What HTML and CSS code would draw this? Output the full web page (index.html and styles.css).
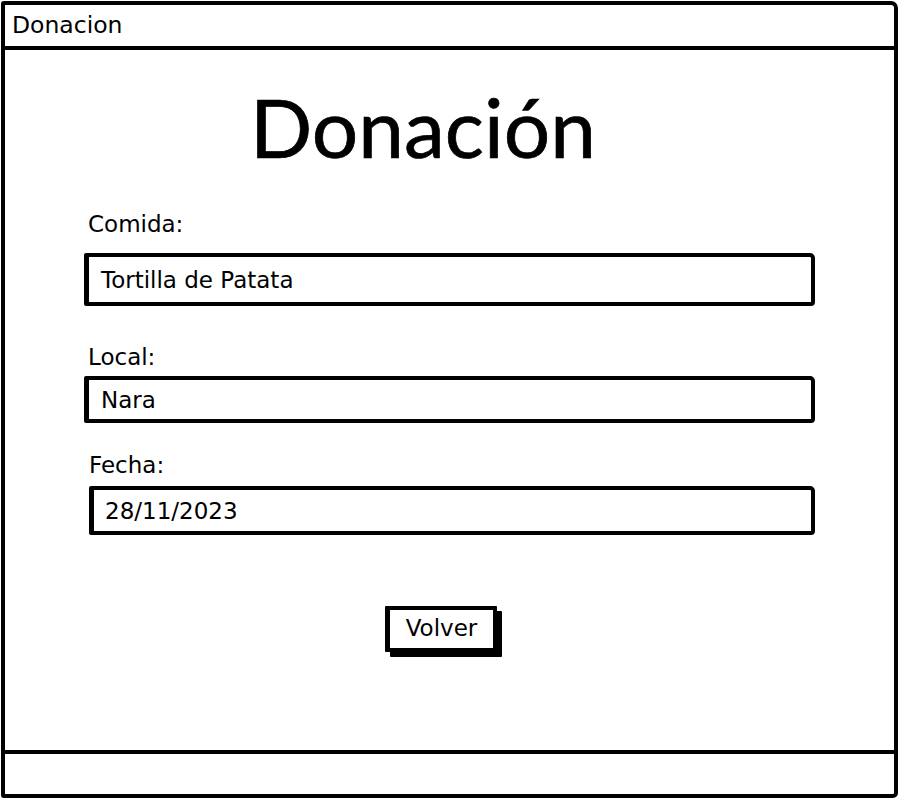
FILE: index.html
```html
<!DOCTYPE html>
<html lang="es">
<head>
<meta charset="utf-8">
<title>Donacion</title>
<link rel="stylesheet" href="styles.css">
</head>
<body>
<div class="window">
  <div class="titlebar">Donacion</div>
  <main class="content">
    <h1 class="heading">Donación</h1>
    <div class="form">
      <label class="label label-comida">Comida:</label>
      <div class="field field-comida">Tortilla de Patata</div>
      <label class="label label-local">Local:</label>
      <div class="field field-local">Nara</div>
      <label class="label label-fecha">Fecha:</label>
      <div class="field field-fecha">28/11/2023</div>
    </div>
    <div class="actions">
      <button class="btn" type="button">Volver</button>
    </div>
  </main>
  <div class="footer"></div>
</div>
</body>
</html>
```
FILE: styles.css
```css
* { box-sizing: border-box; }
html, body { margin: 0; padding: 0; background: #fff; }
body {
  font-family: "DejaVu Sans", "Noto Sans", sans-serif;
  color: #000;
  width: 900px;
  height: 800px;
  overflow: hidden;
}
.window {
  margin: 1px 0 0 1px;
  width: 897px;
  height: 797px;
  border: 4px solid #000;
  border-radius: 3px 7px 5px 3px;
  display: flex;
  flex-direction: column;
}
.titlebar {
  height: 45px;
  border-bottom: 4px solid #000;
  font-size: 23.5px;
  line-height: 40px;
  padding-left: 7px;
}
.content {
  flex: 1;
  display: flex;
  flex-direction: column;
}
.heading {
  margin: 35px 0 0 0;
  font-family: "Lato", "Noto Sans", sans-serif;
  font-weight: 400;
  font-size: 82px;
  line-height: 82px;
  text-align: center;
  padding-right: 53px;
  -webkit-text-stroke: 0.7px #000;
}
.form {
  display: flex;
  flex-direction: column;
  padding-left: 79px;
  width: 810px;
}
.label {
  font-size: 23px;
  line-height: 26px;
  padding-left: 4px;
}
.label-comida { margin-top: 44px; }
.label-local { margin-top: 38px; }
.label-fecha { margin-top: 29px; padding-left: 5px; }
.field {
  border-style: solid;
  border-color: #000;
  border-width: 4px 4px 4px 5px;
  border-radius: 2px 5px 4px 2px;
  font-size: 23px;
  padding-left: 12px;
  display: flex;
  align-items: center;
}
.field-comida { margin-top: 16px; height: 53px; }
.field-local { margin-top: 6px; height: 47px; }
.field-fecha { margin-top: 8px; height: 49px; margin-left: 5px; width: 726px; padding-left: 11px; }
.actions {
  display: flex;
  justify-content: flex-start;
  margin-top: 71px;
  padding-left: 380px;
}
.btn {
  font-family: inherit;
  font-size: 23px;
  background: #fff;
  color: #000;
  border-style: solid;
  border-color: #000;
  border-width: 4px 4px 4px 5px;
  border-radius: 1px;
  width: 112px;
  height: 46px;
  padding: 0 0 2px 0;
  box-shadow: 5px 5px 0 #000;
}
.footer {
  margin-top: auto;
  height: 44px;
  border-top: 4px solid #000;
}
```
